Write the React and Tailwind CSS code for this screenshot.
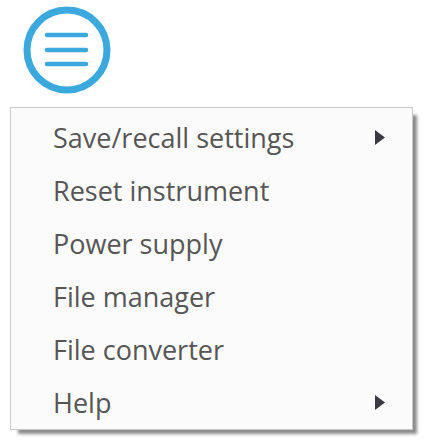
import React from 'react';

const items = [
  { label: 'Save/recall settings', sub: true },
  { label: 'Reset instrument' },
  { label: 'Power supply' },
  { label: 'File manager' },
  { label: 'File converter' },
  { label: 'Help', sub: true },
];

const MenuIcon = () => (
  <svg width="88" height="88" viewBox="0 0 88 88" className="block">
    <circle cx="44" cy="44" r="40" fill="none" stroke="#3ba9de" strokeWidth="7" />
    <g stroke="#3ba9de" strokeWidth="4.5" strokeLinecap="round">
      <line x1="24" y1="29" x2="63" y2="29" />
      <line x1="24" y1="44" x2="63" y2="44" />
      <line x1="24" y1="58" x2="63" y2="58" />
    </g>
  </svg>
);

const App = () => {
  return (
    <div className="w-[429px] h-[446px] bg-white overflow-hidden" style={{ fontFamily: '"Open Sans", "Noto Sans", sans-serif' }}>
      <div className="pl-[23px] pt-[6px]">
        <MenuIcon />
      </div>
      <div className="ml-[10px] mt-[13px] w-[403px] bg-[#fbfbfb] border border-[#c9c9c9] pt-[3px] shadow-[6px_6px_3px_-2px_rgba(0,0,0,0.45)]">
        {items.map((it) => (
          <div key={it.label} className="h-[53px] flex items-center justify-between pl-[42px] pr-[27px]">
            <span className="text-[27px] text-[#565656] leading-none">{it.label}</span>
            {it.sub && (
              <svg width="10" height="15" viewBox="0 0 10 15">
                <path d="M0 0 L10 7.5 L0 15 Z" fill="#3a3a44" />
              </svg>
            )}
          </div>
        ))}
      </div>
    </div>
  );
};

export default App;
